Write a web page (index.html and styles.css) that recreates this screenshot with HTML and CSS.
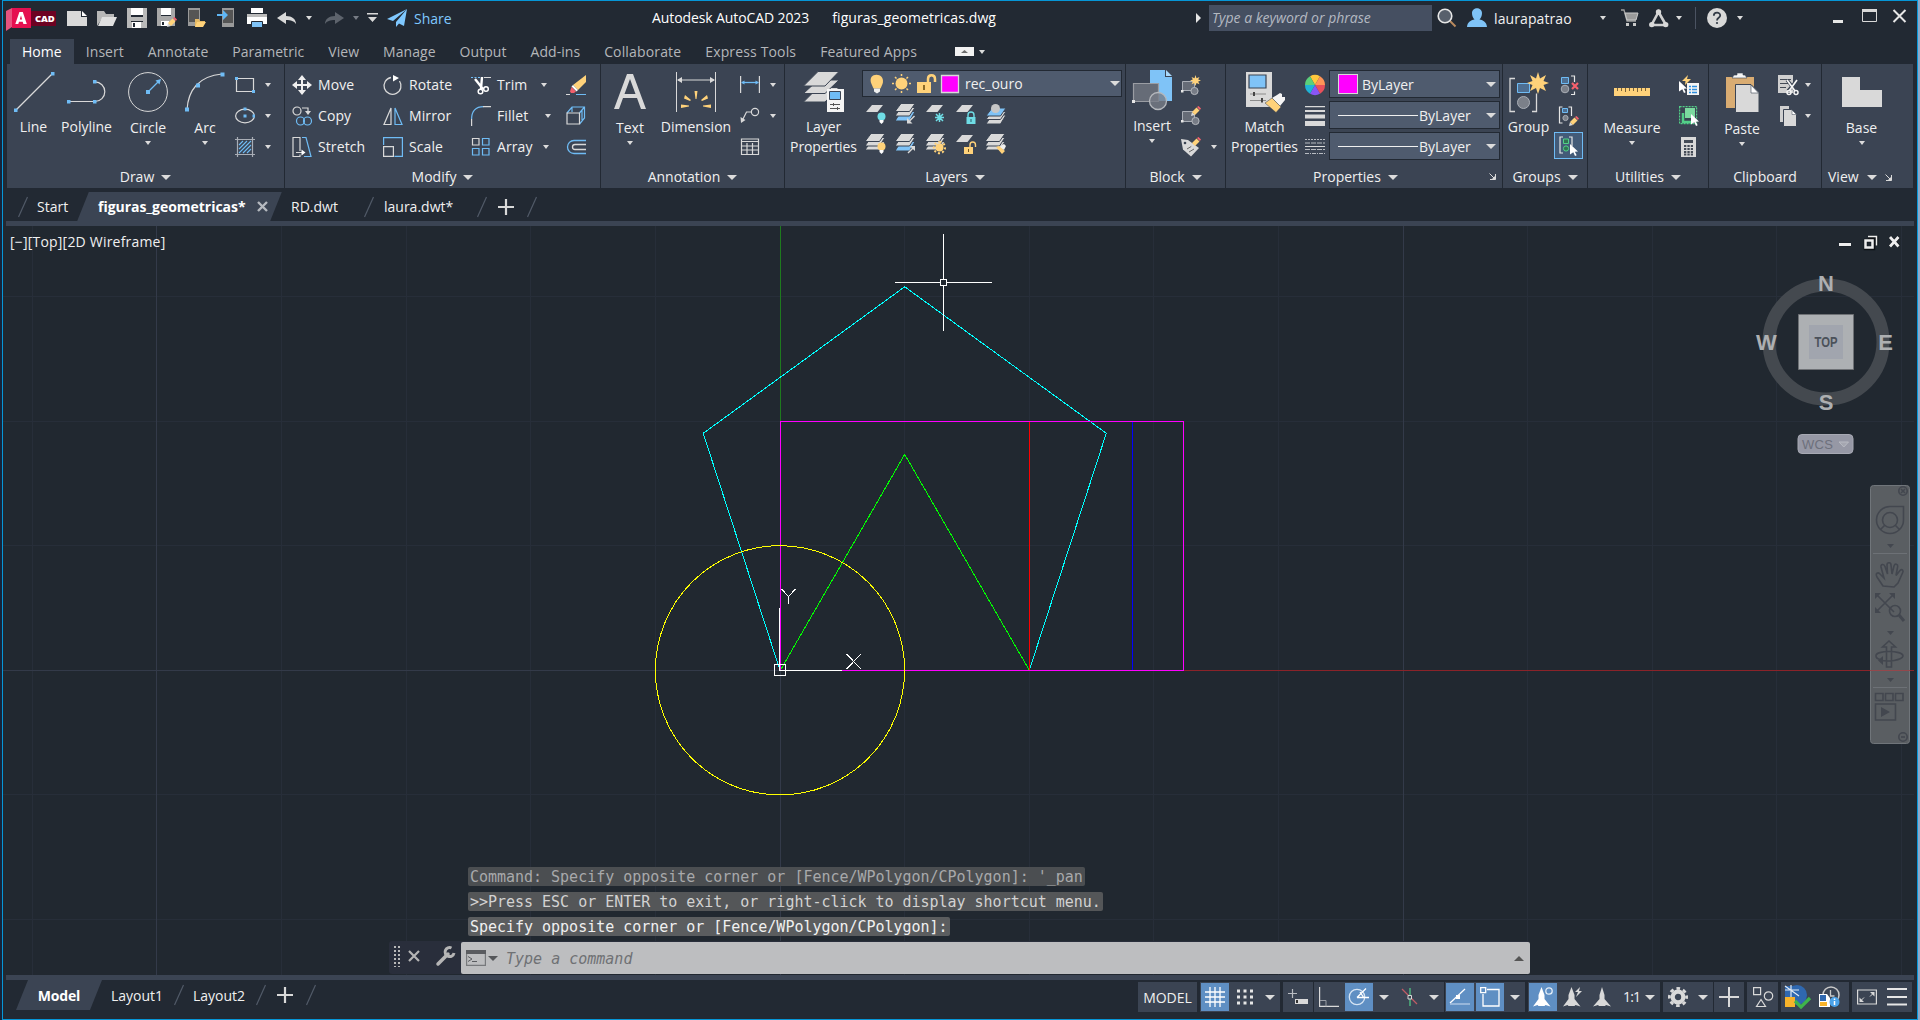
FILE: index.html
```html
<!DOCTYPE html>
<html lang="en">
<head>
<meta charset="utf-8">
<title>Autodesk AutoCAD 2023 - figuras_geometricas.dwg</title>
<link rel="stylesheet" href="styles.css">
</head>
<body>
<svg class="defs" width="0" height="0">
  <symbol id="stack" viewBox="0 0 20 20"><g fill="#d9d9d9" stroke="#3b4453"><path d="M5 7.500h14l-5.500 8.500h-14.500z"/><path d="M5 3.500h14l-5.500 8.500h-14.500z"/><path d="M5-.5h14l-5.500 8h-14.500z"/></g></symbol>
  <symbol id="stackblue" viewBox="0 0 20 20"><g stroke="#3b4453"><path fill="#7fc3f7" d="M5 7.500h14l-5.500 9.500h-14.500z"/><path fill="#d9d9d9" d="M5 3.500h14l-5.500 8.500h-14.500z"/><path fill="#d9d9d9" d="M5-.5h14l-5.500 8h-14.500z"/></g></symbol>
  <symbol id="sheet" viewBox="0 0 20 20"><path fill="#d9d9d9" d="M6 1h11l-5.500 7h-11.500z"/></symbol>
  <symbol id="pencil" viewBox="0 0 10 10"><path fill="#d9d9d9" d="M0 10l1-4 3 3z"/><path fill="#ffd27a" d="M1 6l4.500-4.500 3 3-4.500 4.500z"/><path fill="#f4606c" d="M6 1l1.500-1 2.500 2.500-1.200 1.500z"/></symbol>
  <symbol id="cursor" viewBox="0 0 8 12"><path fill="#fff" d="M0 0l8 7.500-3.200.3 1.900 3.500-1.700.7-1.700-3.700-3.300 2.200z"/></symbol>
  <symbol id="launch" viewBox="0 0 7 7"><path fill="none" stroke="#d9d9d9" d="M.5.5l5 5M6.500 1v5.500h-5.500"/><path fill="#d9d9d9" d="M6.500 2.500v4h-4z"/></symbol>
</svg>
<div class="window">

<header class="titlebar">
  <svg class="logo" width="50" height="24" viewBox="0 0 50 24"><path fill="#e8537f" d="M0 3l6-3v19l-6 4z"/><path fill="#6d0222" d="M23 3h27v15h-27z"/><path fill="#e51050" d="M6 0h19v20h-19z"/><path fill="#fff" fill-rule="evenodd" d="M13.400 4h3.400l4 12h-3.400l-.7-2.200h-3.700l-.7 2.200h-3zM15 7.500l-1.200 4h2.300z"/><text x="29" y="13.500" class="logotext">CAD</text></svg>
  <nav class="quick">
    <svg width="20" height="20"><path fill="#d9d9d9" d="M0 3h14v6h6v9h-20z"/><path fill="#fff" d="M15 3l5 5h-5z"/></svg>
    <svg width="20" height="20"><path fill="#b8b8b8" d="M0 18v-15h7l2 3h8v3h-11z"/><path fill="#e0e0e0" d="M5 9h15l-4 9h-15z"/></svg>
    <svg width="20" height="20"><path fill="#b9b9b9" d="M0 0h20v20h-20z"/><path fill="#fff" d="M4 0h12v8h-12zM5 14h9v6h-9z"/><path fill="#222933" d="M4 7h12v2h-12zM4 13h12v1h-12zM6 15h2v4h-2z"/></svg>
    <svg width="20" height="20"><path fill="#a8a8a8" d="M0 0h18v18h-18z"/><path fill="#fff" d="M4 0h10v7h-10zM4 13h8v5h-8z"/><path fill="#222933" d="M4 7h10v1h-10zM5 14h2v3h-2z"/><use href="#pencil" x="10" y="9" width="10" height="10"/></svg>
    <svg width="20" height="20"><path fill="#9a9a9a" d="M1 0h12v18h-12z"/><path fill="#555" d="M2 2h10v12h-10z"/><path fill="#e5b964" d="M8 19v-8h4l1 2h5v2"/><path fill="#ffd27a" d="M10 14h9l-3 5h-8z"/></svg>
    <svg width="20" height="20"><path fill="#9a9a9a" d="M5 0h12v19h-12z"/><path fill="#555" d="M6 2h10v13h-10z"/><path fill="#5fb6f5" d="M0 6h6v-4l5 5-5 5v-4h-6z"/></svg>
    <svg width="20" height="20"><path fill="#fff" d="M4 0h12v5h-12zM0 7h20v9h-20z"/><path fill="#bbb" d="M0 6h20v3h-20z"/><path fill="#7fc3f7" stroke="#222933" d="M4.500 13.500h11v6h-11z"/></svg>
    <svg width="20" height="20"><path fill="#d9d9d9" d="M0 10l9-6v4c6 0 10 3 10 8-2-3-5-4-10-4v4z"/></svg>
    <i class="caret"></i>
    <svg width="20" height="20"><path fill="#5d636c" d="M20 10l-9-6v4c-6 0-10 3-10 8 2-3 5-4 10-4v4z"/></svg>
    <i class="caret dim"></i>
    <svg class="custom" width="11" height="10"><path fill="#d9d9d9" d="M0 0h11v1.500h-11zM1 4h9l-4.500 5z"/></svg>
    <svg class="plane" width="20" height="18"><path fill="#7fc8ff" d="M20 0l-20 10 6 2zM20 0l-11 13v5l3-3.500 5 2.500z"/></svg>
    <span class="share">Share</span>
  </nav>
  <div class="apptitle"><span>Autodesk AutoCAD 2023</span><span class="doc">figuras_geometricas.dwg</span></div>
  <i class="caretright"></i>
  <div class="search">Type a keyword or phrase</div>
  <svg class="mag" width="20" height="20"><path stroke="#b98a5e" stroke-width="2" d="M13 13l5.500 5.500"/><circle cx="8" cy="8" r="6.800" fill="#58606c" stroke="#e6e6e6" stroke-width="1.600"/></svg>
  <svg class="user" width="20" height="20"><path fill="#7fc3f7" d="M5 5c0-6.500 10-6.500 10 0 0 3-1 5-2.500 6.500 4 .8 7 2.500 7.500 7.500h-20c.5-5 3.500-6.700 7.500-7.500-1.500-1.500-2.500-3.500-2.500-6.500z"/></svg>
  <span class="account">laurapatrao</span>
  <i class="caret c-account"></i>
  <svg class="cart" width="18" height="18"><path fill="none" stroke="#a0a0a0" stroke-width="1.300" d="M0 1h3l3 11h9"/><path fill="#9b9b9b" stroke="#c9c9c9" d="M4 4h13l-2 7h-9z"/><path fill="#c9c9c9" d="M5 14h3v3h-3zM12 14h3v3h-3z"/></svg>
  <svg class="adsk" width="20" height="19"><path fill="none" stroke="#d0d0d0" stroke-width="2.600" d="M9.500 3l-7 13h14.500z"/><g fill="#d9d9d9"><circle cx="9.500" cy="3" r="2.700"/><circle cx="2.800" cy="15.600" r="2.700"/><circle cx="16.700" cy="15.600" r="2.700"/></g></svg>
  <i class="caret c-adsk"></i><i class="vsep"></i>
  <svg class="help" width="20" height="20"><circle cx="10" cy="10" r="10" fill="#d9d9d9"/><path fill="none" stroke="#333b47" stroke-width="1.800" d="M6.800 7.800c0-4.200 6.500-4 6.400-.4 0 2.500-3.200 2.200-3.200 5"/><circle cx="10" cy="15" r="1.100" fill="#333b47"/></svg>
  <i class="caret c-help"></i>
  <svg class="winbtns" width="75" height="16"><path fill="#e6e6e6" d="M0 11h10v3h-10z"/><path fill="none" stroke="#d9d9d9" d="M29.500.5h14v12h-14z"/><path fill="#d9d9d9" d="M29 0h15v3h-15z"/><path stroke="#e6e6e6" stroke-width="2" d="M60.500 1l12 12M72.500 1l-12 12"/></svg>
</header>

<nav class="tabs">
  <span class="active">Home</span><span>Insert</span><span>Annotate</span><span>Parametric</span><span>View</span><span>Manage</span><span>Output</span><span>Add-ins</span><span>Collaborate</span><span>Express Tools</span><span>Featured Apps</span>
  <svg width="19" height="9"><path fill="#f2f2f2" d="M0 0h19v9h-19z"/><path fill="#6d6d6d" d="M6 6l3.500-3 3.500 3z"/></svg><i class="caret"></i>
</nav>

<section class="ribbon">
  <div class="panel draw">
    <div class="body">
      <div class="big b-line"><svg width="40" height="40"><path stroke="#d9d9d9" stroke-width="1.200" d="M2 38l36-36"/><path fill="#6fbcf5" d="M0 36.500h3.500v3.500h-3.500zM37 0h3.500v3.500h-3.500z"/></svg><b>Line</b></div>
      <div class="big b-poly"><svg width="40" height="40"><path fill="none" stroke="#d9d9d9" stroke-width="1.200" d="M1 29.500h27a9.800 9.800 0 0 0 0-19.600"/><path fill="#6fbcf5" d="M0 28h3.500v3.500h-3.500zM26 28h3.500v3.500h-3.500zM26 8h3.500v3.500h-3.500z"/></svg><b>Polyline</b></div>
      <div class="big drop b-circle"><svg width="40" height="40"><circle cx="20" cy="20" r="19.400" fill="none" stroke="#d9d9d9"/><path stroke="#6fbcf5" stroke-width="1.200" d="M20 20l10-10"/><path fill="#6fbcf5" d="M18 18h4v4h-4zM33 7l-1.500 5.500-4-4z"/></svg><b>Circle</b><i class="caret"></i></div>
      <div class="big drop b-arc"><svg width="40" height="40"><path fill="none" stroke="#d9d9d9" stroke-width="1.200" d="M2 38c1-20 12-34 35-36"/><path fill="#6fbcf5" d="M0 35.500h4v4h-4zM11 11.500h4v4h-4zM35.500.5h4v4h-4z"/></svg><b>Arc</b><i class="caret"></i></div>
      <div class="rows r-draw">
        <div><svg width="20" height="20"><path fill="none" stroke="#d9d9d9" stroke-width="1.200" d="M1.500 3.500h17v13h-17z"/><path fill="#6fbcf5" d="M0 2h3v3h-3zM17 15h3v3h-3z"/></svg><i class="caret"></i></div>
        <div><svg width="20" height="20"><ellipse cx="10" cy="10" rx="9.400" ry="6.800" fill="none" stroke="#d9d9d9" stroke-width="1.200"/><path fill="#6fbcf5" d="M8.500 8.500h3v3h-3zM8.500 1.500h3v3h-3zM17.500 8.500h2.500v3h-2.500z"/></svg><i class="caret"></i></div>
        <div><svg width="20" height="20"><path stroke="#a9aeb6" stroke-width="1.200" d="M2.500 0v20M17.500 0v20M0 2.500h20M0 17.500h20"/><path stroke="#6fbcf5" stroke-width="1.100" d="M4 8l4-4M4 12l8-8M4 16l12-12M8 16l8-8M12 16l4-4"/></svg><i class="caret"></i></div>
      </div>
    </div>
    <h3>Draw<i class="bigcaret"></i></h3>
  </div>

  <div class="panel modify">
    <div class="body">
      <div class="rows m1">
        <div><svg width="20" height="20"><path fill="#f0f0f0" d="M10 0l4 5h-3v4h4v-3l5 4-5 4v-3h-4v4h3l-4 5-4-5h3v-4h-4v3l-5-4 5-4v3h4v-4h-3z"/></svg>Move</div>
        <div><svg width="20" height="20"><g fill="none" stroke-width="1.200"><circle cx="5" cy="5" r="4" stroke="#d9d9d9"/><path stroke="#d9d9d9" d="M10 2h6v4"/><g stroke="#6fbcf5"><circle cx="8.500" cy="15" r="4"/><circle cx="15.500" cy="15" r="4"/></g></g><path fill="#d9d9d9" d="M13 5h6l-3 4z"/></svg>Copy</div>
        <div><svg width="20" height="20"><g fill="none" stroke-width="1.200"><path stroke="#d9d9d9" d="M8 14v-13.500h-7v19h7v-2M4 15.500h8"/><path stroke="#6fbcf5" d="M10 .5h4l5 19h-7"/></g><path fill="#fff" d="M9.500 12.500l4 3-4 3z"/></svg>Stretch</div>
      </div>
      <div class="rows m2">
        <div><svg width="20" height="20"><path fill="none" stroke="#d9d9d9" stroke-width="1.300" d="M8 2.500a8.500 8.500 0 1 0 8.500 3.500"/><path fill="#fff" d="M10 0l6 3-6 3.500z"/></svg>Rotate</div>
        <div><svg width="20" height="20"><path fill="none" stroke="#d9d9d9" stroke-width="1.200" d="M8 2v16.500h-7z"/><path fill="none" stroke="#6fbcf5" stroke-width="1.200" d="M12 2v16.500h7z"/></svg>Mirror</div>
        <div><svg width="20" height="20"><path fill="none" stroke="#6fbcf5" stroke-width="1.200" d="M.6 8v-7.400h18.800v18.800h-8"/><path fill="none" stroke="#d9d9d9" stroke-width="1.200" d="M.6 9.600h9.800v9.800h-9.800z"/></svg>Scale</div>
      </div>
      <div class="rows m3">
        <div><svg width="20" height="20"><path stroke="#6fbcf5" stroke-dasharray="2 1.500" d="M0 2.500h10"/><path stroke="#d9d9d9" d="M13 2.500h7"/><path stroke="#fff" stroke-width="2.400" d="M4 4l8 10M11 2l-1 12"/><circle cx="9.500" cy="16.500" r="2.300" fill="none" stroke="#fff" stroke-width="1.500"/><circle cx="15" cy="14" r="2.300" fill="none" stroke="#fff" stroke-width="1.500"/></svg><span class="w1">Trim</span><i class="caret"></i></div>
        <div><svg width="20" height="20"><path fill="none" stroke="#6fbcf5" stroke-width="1.200" d="M.6 13c0-8 4-12.400 12-12.400"/><path stroke="#d9d9d9" stroke-width="1.200" d="M.6 13v7M12 .6h8"/></svg><span class="w2">Fillet</span><i class="caret"></i></div>
        <div><svg width="20" height="20"><g fill="none" stroke-width="1.200"><path stroke="#d9d9d9" d="M1.500 1.500h6.500v6.500h-6.500z"/><path stroke="#6fbcf5" d="M11.500 1.500h6.500v6.500h-6.500zM1.500 11.500h6.500v6.500h-6.500zM11.500 11.500h6.500v6.500h-6.500z"/></g></svg><span class="w3">Array</span><i class="caret"></i></div>
      </div>
      <div class="rows m4">
        <div><svg width="20" height="20"><path fill="#ffd27a" d="M20 0v7l-8 8-5-5z"/><path fill="#fff" d="M7 10l5 5-1.500 1.500-5-5z"/><path fill="#f4606c" d="M5.500 12l4.500 4.500-2 1.500h-3l-1-1.500z"/><path stroke="#d9d9d9" d="M0 19.500h4"/><path stroke="#6fbcf5" d="M10 19.500h10"/></svg></div>
        <div><svg width="20" height="20"><path fill="none" stroke="#6fbcf5" stroke-width="1.200" d="M1 7l5-6h12.500v11l-5 6M18.500 1l-5 6M6 1v5M16 4v10"/><path fill="none" stroke="#d9d9d9" stroke-width="1.200" d="M1 7h12.500v11h-12.500z"/></svg></div>
        <div><svg width="20" height="20"><path fill="none" stroke="#6fbcf5" stroke-width="1.300" d="M20 3.500h-12a6.500 6.500 0 0 0 0 13h12"/><path fill="none" stroke="#d9d9d9" stroke-width="1.300" d="M20 7.500h-11a2.500 2.500 0 0 0 0 5h11"/></svg></div>
      </div>
    </div>
    <h3>Modify<i class="bigcaret"></i></h3>
  </div>

  <div class="panel annot">
    <div class="body">
      <div class="big drop b-text"><svg width="40" height="40"><path fill="#d9d9d9" fill-rule="evenodd" d="M17 2h6l13 35h-5l-4-11h-14l-4 11h-5zM20 7l-5.500 15h11z"/></svg><b>Text</b><i class="caret"></i></div>
      <div class="big b-dim"><svg width="40" height="40"><path stroke="#d9d9d9" d="M.5 0v40M39.500 0v40M2 8h36"/><path fill="#d9d9d9" d="M1 8l5-3v6zM39 8l-5-3v6z"/><path fill="#ffd27a" d="M18.500 19h3l-1 8h-1zM9 23l6 5-1 1-6-2.500zM31 23l-6 5 1 1 6-2.500zM5 32.500l8 1v1l-8 1.500zM35 32.500l-8 1v1l8 1.500z"/></svg><b>Dimension</b></div>
      <div class="rows r-annot">
        <div><svg width="20" height="20"><path stroke="#d9d9d9" stroke-width="1.200" d="M.6 1v17M19.400 1v17"/><path stroke="#6fbcf5" stroke-width="1.300" d="M2 7.500h16"/><path fill="#6fbcf5" d="M1 7.500l3.500-2v4zM19 7.500l-3.500-2v4z"/></svg><i class="caret"></i></div>
        <div><svg width="20" height="20"><circle cx="15" cy="6" r="3.600" fill="none" stroke="#d9d9d9" stroke-width="1.200"/><path fill="none" stroke="#d9d9d9" stroke-width="1.200" d="M11.500 6h-5l-4 8"/><path fill="#d9d9d9" d="M.5 11l5 3-4.500 3z"/></svg><i class="caret"></i></div>
        <div><svg width="20" height="20"><path fill="none" stroke="#d9d9d9" stroke-width="1.200" d="M1.500 2h17v15.500h-17zM1.500 4.500h17M1.500 9h17M1.500 13h17M7 6v11M12.500 6v11"/></svg></div>
      </div>
    </div>
    <h3>Annotation<i class="bigcaret"></i></h3>
  </div>

  <div class="panel layers">
    <div class="body">
      <div class="big b-layer"><svg width="40" height="40"><g fill="#d9d9d9" stroke="#3b4453"><path d="M14 15.500h21l-14 14.500h-21.500z"/><path d="M14 8h21l-14 13.500h-21.500z"/><path d="M14-.5h21l-14 14.500h-21.500z"/></g><path fill="#f5f5f5" d="M23 17h17v23h-17z"/><path fill="#6fbcf5" stroke="#3b4453" d="M25.500 19.500h11v8h-11z"/><path stroke="#555" d="M26 32.500h10M26 36.500h10M29.500 31v3M33.500 35v3"/></svg><b>Layer<br>Properties</b></div>
      <div class="layerbox">
        <div class="combo c-layer"><svg width="92" height="22"><path fill="#ffd27a" d="M3.500 11c-5.500-12.500 15-12.500 11 0l-2 4.500h-7z"/><path fill="#f0f0f0" d="M6 15.500h6v3l-3 2-3-2z"/><circle cx="33.500" cy="10.500" r="6" fill="#ffd27a"/><path stroke="#ffd27a" stroke-width="1.500" d="M33.500 1v2M33.500 18v2M24 10.500h2M41 10.500h2M27 4l1.500 1.500M38.500 15.500l1.500 1.500M40 4l-1.500 1.500M28.500 15.500l-1.500 1.500"/><path fill="#ffd27a" d="M49 9h14v11h-14z"/><path fill="none" stroke="#ffd27a" stroke-width="2.500" d="M60 10v-4c0-5 7-5 7 0v3"/><path fill="#8c6a27" d="M55 12h2v5h-2z"/><path fill="#ff00ff" stroke="#d9d9d9" stroke-width="1.300" d="M73.500 2.500h17v17h-17z"/></svg><span>rec_ouro</span><i class="bigcaret"></i></div>
        <div class="icons">
          <svg width="20" height="20"><use href="#sheet" width="20" height="20"/><circle cx="15.500" cy="12.500" r="4" fill="#6fdde6"/><path fill="#fff" d="M13.500 16h4v2l-2 2-2-2z"/></svg>
          <svg width="20" height="20"><use href="#stackblue" width="20" height="20"/><path stroke="#d9d9d9" stroke-width="1.500" d="M18.500 12l-5 5"/><path fill="#d9d9d9" d="M11 14v5.500h5.500z"/></svg>
          <svg width="20" height="20"><use href="#sheet" width="20" height="20"/><path stroke="#6fdde6" stroke-width="1.500" d="M13.500 9v9M9 13.500h9M10 10l7 7M17 10l-7 7"/></svg>
          <svg width="20" height="20"><use href="#sheet" width="20" height="20"/><path fill="#6fdde6" d="M10.500 13h9v7h-9z"/><path fill="none" stroke="#6fdde6" stroke-width="1.400" d="M12 13v-2c0-4 6-4 6 0v2"/><path fill="#2c5c68" d="M14.500 15h1v3h-1z"/></svg>
          <svg width="20" height="20"><g stroke="#3b4453"><path fill="#d9d9d9" d="M6 11h14l-5.500 9h-14.500z"/><path fill="#d9d9d9" d="M6 7.500h14l-5.500 8h-14.500z"/><path fill="#7fc3f7" d="M6 4h14l-5.500 8h-14.500z"/></g><circle cx="9.500" cy="4.500" r="4.500" fill="#c6c6c6"/></svg>
        </div>
        <div class="icons">
          <svg width="20" height="20"><use href="#stack" width="20" height="20"/><circle cx="15.500" cy="12.500" r="4" fill="#ffd27a"/><path fill="#fff" d="M13.500 16h4v2l-2 2-2-2z"/></svg>
          <svg width="20" height="20"><use href="#stackblue" width="20" height="20"/><path stroke="#d9d9d9" stroke-width="1.500" d="M12 19l5-5"/><path fill="#d9d9d9" d="M19 17v-5h-5.500z"/></svg>
          <svg width="20" height="20"><use href="#stack" width="20" height="20"/><circle cx="13.500" cy="13.500" r="4" fill="#ffd27a"/><path stroke="#ffd27a" stroke-width="2" stroke-dasharray="2 2.200" d="M13.500 8a5.600 5.600 0 1 1-.1 0" fill="none"/></svg>
          <svg width="20" height="20"><use href="#sheet" width="20" height="20"/><path fill="#ffd27a" d="M8 13h9v7h-9z"/><path fill="none" stroke="#ffd27a" stroke-width="1.400" d="M14 13v-2c0-4 5.500-4 5.500 0v2"/><path fill="#6b5220" d="M12 15h1v3h-1z"/></svg>
          <svg width="20" height="20"><use href="#stack" width="20" height="20"/><path fill="#f0f0f0" d="M13 14l3-3 2-1 2 2-1 2-1 2z"/><path fill="#ffd27a" d="M10 13l3-1 6 5-3 3z"/></svg>
        </div>
      </div>
    </div>
    <h3>Layers<i class="bigcaret"></i></h3>
  </div>

  <div class="panel block">
    <div class="body">
      <div class="big drop b-insert"><svg width="40" height="40"><path fill="#7fc3f7" d="M18 0h15v7h7v24h-22z"/><path fill="#a8d8fb" d="M34 0l6 6h-6z"/><path fill="#666c77" stroke="#9a9da3" stroke-width="1.200" d="M1.500 13.500h25v18h-25z"/><circle cx="26" cy="31" r="8.500" fill="#777c86" fill-opacity=".8" stroke="#b5b8bd" stroke-width="1.300"/><path fill="#e6e6e6" d="M0 30h3v3h-3z"/></svg><b>Insert</b><i class="caret"></i></div>
      <div class="rows r-block">
        <div><svg width="20" height="20"><path fill="#666c77" stroke="#a9aeb6" d="M1.500 6.500h12v9h-12z"/><circle cx="13.500" cy="16" r="3.600" fill="#777c86" stroke="#b5b8bd"/><path fill="#ffd27a" d="M14.500 0l1 3.200 3-1.200-1.300 2.600 2.800.9-2.800 1 1.300 2.800-3-1.200-1 3-1-3-3 1.200 1.300-2.800-2.800-1 2.800-.9-1.300-2.600 3 1.200z"/><path fill="#e6e6e6" d="M0 15h2.500v2.500h-2.500z"/></svg></div>
        <div><svg width="20" height="20"><path fill="#666c77" stroke="#a9aeb6" d="M1.500 5.500h12v10h-12z"/><circle cx="14.500" cy="15" r="3.600" fill="#777c86" stroke="#b5b8bd"/><use href="#pencil" x="10" y="0" width="10" height="10"/><path fill="#e6e6e6" d="M0 14h2.500v2.500h-2.500z"/></svg></div>
        <div><svg width="20" height="20"><path fill="#d9d9d9" d="M0 2l7 1 11 8-8 8.500-8-7z"/><circle cx="4" cy="6" r="1.300" fill="#3b4453"/><path stroke="#666" d="M6 12l5-3M8 15l5-3"/><use href="#pencil" x="10" y="0" width="10" height="10"/></svg><i class="caret"></i></div>
      </div>
    </div>
    <h3>Block<i class="bigcaret"></i></h3>
  </div>

  <div class="panel props">
    <div class="body">
      <div class="big b-match"><svg width="40" height="40"><path fill="#d9d9d9" d="M0 0h26v35h-26z"/><path fill="#7fc3f7" stroke="#3b4453" stroke-width="1.200" d="M3 3h17v13h-17z"/><path stroke="#8b8b8b" stroke-width="1.200" d="M4 22h16M4 28.500h16"/><path stroke="#444" stroke-width="2" d="M8 20v4M16 26v4.500"/><path fill="#f5f5f5" d="M26 26l5-3 3-2 2 1v3h3v3l-5 6z"/><path fill="#ffd27a" stroke="#3b4453" stroke-width=".5" d="M19 31l7-5 9 9-5 5.500z"/></svg><b>Match<br>Properties</b></div>
      <div class="rows r-props">
        <div><svg width="20" height="20"><path fill="#ffc83d" d="M10 10l-5-8.700a10 10 0 0 1 10 0z"/><path fill="#ff9457" d="M10 10l5-8.700a10 10 0 0 1 5 8.700z"/><path fill="#e8505b" d="M10 10h10a10 10 0 0 1-5 8.700z"/><path fill="#8a56f5" d="M10 10l5 8.700a10 10 0 0 1-10 0z"/><path fill="#1fb3d6" d="M10 10l-5 8.700a10 10 0 0 1-5-8.700z"/><path fill="#5bcf7a" d="M10 10h-10a10 10 0 0 1 5-8.700z"/></svg></div>
        <div><svg width="20" height="20"><path fill="#d9d9d9" d="M0 0h20v1.200h-20zM0 4h20v2h-20zM0 8.500h20v4h-20zM0 15h20v5h-20z"/></svg></div>
        <div><svg width="20" height="20"><path stroke="#b8bcc2" stroke-dasharray="2 1" d="M0 2.500h20"/><path stroke="#b8bcc2" stroke-dasharray="5 1" d="M0 6h20M0 12.500h20"/><path stroke="#d9d9d9" d="M0 9.500h20"/><path stroke="#b8bcc2" stroke-dasharray="4 1 1 1" d="M0 16.500h20"/></svg></div>
      </div>
      <div class="combos">
        <div class="combo"><i class="swatch"></i><span>ByLayer</span><i class="bigcaret"></i></div>
        <div class="combo"><i class="rule"></i><span>ByLayer</span><i class="bigcaret"></i></div>
        <div class="combo"><i class="rule"></i><span>ByLayer</span><i class="bigcaret"></i></div>
      </div>
    </div>
    <h3>Properties<i class="bigcaret"></i><svg class="launch" width="7" height="7"><use href="#launch"/></svg></h3>
  </div>

  <div class="panel groups">
    <div class="body">
      <div class="big b-group"><svg width="40" height="40"><path fill="none" stroke="#d9d9d9" stroke-width="1.300" d="M6 6.500h-5v33h5M23 39.500h4.500v-18"/><path fill="#4e6f92" stroke="#6fbcf5" d="M8.500 11.500h12v9h-12z"/><circle cx="14.500" cy="30.500" r="6" fill="#7b8089" stroke="#a9aeb6"/><path fill="#ffd27a" d="M29 0l2 6.500 6-3.500-2.500 6 5.500 2-5.500 2 2.500 6-6-3-2 6-2-6-6 3 2.500-6-5.500-2 5.500-2-2.500-6 6 3.500z"/></svg><b>Group</b></div>
      <div class="rows r-groups">
        <div><svg width="20" height="20"><path fill="#4e6f92" stroke="#6fbcf5" d="M2.500 2.500h7v6h-7z"/><circle cx="6" cy="14" r="3.800" fill="#7b8089" stroke="#a9aeb6"/><path fill="none" stroke="#e6e6e6" stroke-width="1.200" d="M12 1h3.500v6M12 19.500h3.500v-3"/><path stroke="#f4606c" stroke-width="2.200" d="M13 8l6 6M19 8l-6 6"/></svg></div>
        <div><svg width="20" height="20"><path fill="none" stroke="#e6e6e6" stroke-width="1.200" d="M3.500 1h-3v16h3M9.500 1h3v9"/><path fill="#4e6f92" stroke="#6fbcf5" d="M3.500 2.500h5v4h-5z"/><circle cx="6.500" cy="12" r="2.600" fill="#7b8089" stroke="#a9aeb6"/><use href="#pencil" x="10" y="10" width="10" height="10"/></svg></div>
        <div class="on"><svg width="20" height="20"><path fill="none" stroke="#e6e6e6" stroke-width="1.200" d="M4 1h-3v16h3M10 1h3v9"/><path fill="#2f7553" stroke="#52cf88" d="M4.500 3h5v4.500h-5z"/><circle cx="7" cy="12.500" r="2.600" fill="#2f7553" stroke="#52cf88"/><use href="#cursor" x="11" y="8" width="8" height="12"/></svg></div>
      </div>
    </div>
    <h3>Groups<i class="bigcaret"></i></h3>
  </div>

  <div class="panel utils">
    <div class="body">
      <div class="big drop b-measure"><svg width="40" height="40"><path fill="#ffd27a" d="M2 16h36v8h-36z"/><path stroke="#7a6338" d="M5.500 16v3M9.500 16v3M13.500 16v4M17.500 16v3M21.500 16v3M25.500 16v4M29.500 16v3M33.500 16v3"/></svg><b>Measure</b><i class="caret"></i></div>
      <div class="rows r-utils">
        <div><svg width="20" height="20"><path fill="#ffd27a" d="M9 0l-6 6h3.500l-.5 4 6-6h-4z"/><use href="#cursor" x="0" y="6" width="8" height="12"/><path fill="#f5f5f5" d="M8 8h12v12h-12z"/><path stroke="#2f8fe0" stroke-width="1.400" d="M10 11.500h2M13 11.500h5M10 14.500h2M13 14.500h5M10 17.500h2M13 17.500h5"/></svg></div>
        <div><svg width="20" height="20"><path fill="none" stroke="#52cf88" stroke-width="1.200" stroke-dasharray="2 1" d="M.6.600h17v17h-17z"/><path fill="#7bd99f" d="M6 2h10v10h-10z"/><path fill="none" stroke="#52cf88" stroke-width="2.500" d="M4 7v9h9"/><use href="#cursor" x="12" y="8" width="8" height="12"/></svg></div>
        <div><svg width="20" height="20"><path fill="#d9d9d9" d="M2 0h15v20h-15z"/><path fill="#444b56" d="M5 3h9v3h-9z"/><path stroke="#444b56" stroke-width="2" stroke-dasharray="2.300 1.100" d="M5 9h9M5 12h9M5 15h9M5 17.500h9"/></svg></div>
      </div>
    </div>
    <h3>Utilities<i class="bigcaret"></i></h3>
  </div>

  <div class="panel clip">
    <div class="body">
      <div class="big drop b-paste"><svg width="40" height="41"><path fill="#d9ac72" d="M4 5h28v31h-28z"/><path fill="#f5f5f5" stroke="#3b4453" stroke-width=".6" d="M10 6l2-3h3v-2h6v2h2l2 3z"/><path fill="#d9d9d9" stroke="#3b4453" d="M13.500 12.500h15.500l8 8v20h-23.500z"/><path fill="#fff" stroke="#3b4453" stroke-width=".6" d="M29 13v8h7.500z"/></svg><b>Paste</b><i class="caret"></i></div>
      <div class="rows r-clip">
        <div><svg width="20" height="20"><path fill="#d0d0d0" d="M0 0h15v18h-15z"/><path stroke="#444b56" d="M2 4.500h11M2 8.500h8M2 12.500h6"/><path stroke="#3b4453" stroke-width="3.500" d="M9 5l9 11M19 5l-9 11"/><path stroke="#f5f5f5" stroke-width="1.700" d="M9 5l8 11M19 5l-8 11"/><circle cx="11" cy="17.500" r="2" fill="none" stroke="#f5f5f5" stroke-width="1.500"/><circle cx="18" cy="17.500" r="2" fill="none" stroke="#f5f5f5" stroke-width="1.500"/></svg><i class="caret"></i></div>
        <div><svg width="20" height="20"><path fill="#d0d0d0" d="M2 0h9v16h-9z"/><path fill="#d9d9d9" stroke="#3b4453" d="M5.500 3.500h8l5 5v12h-13z"/><path fill="#fff" stroke="#3b4453" stroke-width=".5" d="M14 4v4.500h4.500z"/></svg><i class="caret"></i></div>
      </div>
    </div>
    <h3>Clipboard</h3>
  </div>

  <div class="panel view">
    <div class="body">
      <div class="big drop b-base"><svg width="40" height="40"><path fill="#d9d9d9" d="M0 5h18v13h22v17h-40z"/></svg><b>Base</b><i class="caret"></i></div>
    </div>
    <h3>View<i class="bigcaret"></i><svg width="7" height="7"><use href="#launch"/></svg></h3>
  </div>
</section>

<nav class="files">
  <svg class="slash" width="10" height="20"><path d="M.5 20l9-20"/></svg>
  <span class="f-start">Start</span>
  <span class="f-active"><b>figuras_geometricas*</b><svg width="11" height="11"><path stroke="#b5b9bf" stroke-width="2.400" d="M1 1l9 9M10 1l-9 9"/></svg></span>
  <span class="f-rd">RD.dwt</span>
  <svg class="slash" width="10" height="20"><path d="M.5 20l9-20"/></svg>
  <span class="f-laura">laura.dwt*</span>
  <svg class="slash" width="10" height="20"><path d="M.5 20l9-20"/></svg>
  <svg class="plus" width="16" height="16"><path stroke="#d9d9d9" stroke-width="2.200" d="M0 8h16M8 0v16"/></svg>
  <svg class="slash" width="10" height="20"><path d="M.5 20l9-20"/></svg>
</nav>

<main class="canvas">
  <svg class="drawing" width="1914" height="749" viewBox="3 226 1914 749">
    <g shape-rendering="crispEdges" fill="none">
      <path stroke="#272e39" d="M32.500 226v749M281.500 226v749M406.500 226v749M530.500 226v749M655.500 226v749M904.500 226v749M1029.500 226v749M1153.500 226v749M1278.500 226v749M1527.500 226v749M1652.500 226v749M1776.500 226v749M1901.500 226v749M3 296.500h1911M3 421.500h1911M3 545.500h1911M3 794.500h1911M3 919.500h1911"/>
      <path stroke="#333a49" d="M156.500 226v749M1403.500 226v749M780.500 670v305M3 670.500h777"/>
      <path stroke="#1e7a1e" d="M780.500 226v195"/>
      <path stroke="#8a2329" d="M1184 670.500h730"/>
      <path stroke="#00ffff" d="M780 670.300l-76.800-237 201.500-146.500 201.600 146.500-77 237z"/>
      <path stroke="#00ff00" d="M780.300 670.400l124.400-216 124.700 216z"/>
      <path stroke="#0000ff" d="M1132.500 421v249"/>
      <path stroke="#ff00ff" d="M780.500 421.500h403v249h-403z"/>
      <path stroke="#ff0000" d="M1029.500 422v248"/>
      <circle cx="780" cy="670.300" r="124.600" stroke="#ffff00"/>
      <path stroke="#fff" d="M779.500 608v57M785 670.500h57M774.500 664.500h11v11h-11zM779.500 664v6h6M781.500 589l7 7.500 7-7.500M788.500 596v8M846.500 654l14.500 15M861 654l-14.500 15"/>
      <path stroke="#fff" d="M895 282.500h45M947 282.500h45M943.500 234v45M943.500 286v45M940.500 279.500h6v6h-6z"/>
    </g>
  </svg>
  <div class="vplabel">[−][Top][2D Wireframe]</div>
  <svg class="docbtns" width="66" height="18"><g stroke="#0d1014" stroke-width="3.500" fill="none"><path d="M2 10.500h12M28.500 6.500h8v8h-8zM31 3.500h8.500v8M53 3l9 9.500M62 3l-9 9.500"/></g><g stroke="#eee" fill="none"><path stroke-width="3" d="M2 10.500h12"/><path stroke-width="2.500" d="M28.500 6.500h7v7h-7z"/><path stroke-width="1.500" d="M31 2.500h8.500v9"/><path stroke-width="2.800" d="M53 3l8.500 9.500M61.500 3l-8.500 9.500"/></g></svg>
  <svg class="cube" width="140" height="190" viewBox="1755 270 140 190">
    <circle cx="1826" cy="342" r="57" fill="none" stroke="#44494f" stroke-width="13"/>
    <path fill="#adb0b3" stroke="#6e7175" d="M1798.500 314.500h55v55h-55z"/><path fill="#a1a5ae" d="M1809 325h34v34h-34z"/>
    <text class="top" x="1826" y="347" textLength="23" lengthAdjust="spacingAndGlyphs">TOP</text>
    <g class="compass"><text x="1826" y="290.500">N</text><text x="1826" y="409.500">S</text><text x="1766.500" y="350">W</text><text x="1885.500" y="350">E</text></g>
    <rect x="1798" y="434.500" width="55" height="19" rx="4" fill="#9698a5" stroke="#a7a9b3"/>
    <text class="wcs" x="1802" y="449">WCS</text><path fill="#a4a6b0" stroke="#b8bac2" d="M1839 442h9.500l-4.700 5z"/>
  </svg>
  <svg class="navbar" width="42" height="262" viewBox="1869 484 42 262">
    <rect x="1870.500" y="485.500" width="39" height="258" rx="3" fill="#5a5e62" stroke="#70757a"/>
    <path stroke="#94484c" d="M1870 670.500h40"/><path stroke="#6d7176" d="M1873 553.500h34M1873 687.500h34"/>
    <g fill="none" stroke="#43474f" stroke-width="1.600">
      <circle cx="1903" cy="491" r="4.200"/><path d="M1901 489l4 4M1905 489l-4 4"/>
      <path d="M1876.500 520a13.500 13.500 0 0 1 13.500-13.500h13.500v13.500a13.500 13.500 0 0 1-27 0z"/><circle cx="1890" cy="520" r="7.500"/><path d="M1884.500 525.500l-4 4M1895.500 525.500l4 4"/>
      <path d="M1883 586l-6-9c-2-4 1-5 3-3l4 4-3-11c-.5-3 3-3.500 4-.5l2.500 7.500-.5-9c0-3 4-3 4 0l1 9 2-8c1-3 4-2 3.700.5l-1.700 9 4-5c2-2 4 0 2.500 2.500l-4.500 10-4 4z"/>
      <path d="M1876 594l18 18M1894 594l-18 18"/><circle cx="1895" cy="611" r="5.500"/><path stroke-width="3" d="M1899 615l5 6"/>
      <path d="M1886.500 667v-20h-4l6.500-6 6.500 6h-4v20zM1880 660c8 2.500 22 0 23-4 0-6-28-6-27 0 0 2 2 3 4 3.500"/>
      <path d="M1875.500 693.500h7.500v7h-7.500zM1885.500 693.500h7.500v7h-7.500zM1895.500 693.500h7.500v7h-7.500zM1875.500 704h20v16h-20z"/>
      <circle cx="1903" cy="737" r="4.200"/><path d="M1901 737h4"/>
    </g>
    <path fill="#43474f" d="M1875 593h6l-6 6zM1895 593v6l-6-6zM1875 613v-6l6 6zM1887 544h7l-3.500 4zM1887 631h7l-3.500 4zM1887 678h7l-3.500 4zM1881 707l9 5-9 5zM1883 656v9l-5-4.500z"/>
  </svg>
  <div class="console">
    <p>Command: Specify opposite corner or [Fence/WPolygon/CPolygon]: '_pan</p>
    <p>&gt;&gt;Press ESC or ENTER to exit, or right-click to display shortcut menu.</p>
    <p>Specify opposite corner or [Fence/WPolygon/CPolygon]:</p>
  </div>
  <div class="cmdbar">
    <svg class="grip" width="72" height="33"><path stroke="#b9b9b9" stroke-width="2" stroke-dasharray="2 2" d="M6 5v21M10 5v21"/><path stroke="#b5b5b5" stroke-width="2.200" d="M20 10l10 10M30 10l-10 10"/><path stroke="#b5b5b5" stroke-width="3.500" stroke-linecap="round" d="M49 23l10-10"/><path fill="none" stroke="#b5b5b5" stroke-width="3" d="M62.500 7a4.500 4.500 0 1 0 2.500 5"/></svg>
    <div class="cmdinput"><svg width="20" height="16"><path fill="none" stroke="#77797c" stroke-width="1.200" d="M.6.600h18.800v14.800h-18.800z"/><path fill="#5a5c60" d="M0 0h20v4h-20z"/><path fill="none" stroke="#5a5c60" d="M2 6.500l4 2.500-4 2.500M6 11.500h5"/></svg><i class="bigcaret"></i><em>Type a command</em><i class="bigcaret up"></i></div>
  </div>
</main>

<footer class="status">
  <span class="l-active">Model</span><span class="l1">Layout1</span><svg class="slash" width="10" height="20"><path d="M.5 20l9-20"/></svg><span class="l2">Layout2</span><svg class="slash" width="10" height="20"><path d="M.5 20l9-20"/></svg>
  <svg class="plus" width="16" height="16"><path stroke="#d9d9d9" stroke-width="2.200" d="M0 8h16M8 0v16"/></svg><svg class="slash" width="10" height="20"><path d="M.5 20l9-20"/></svg>
  <div class="tools">
    <div class="box s-model">MODEL</div>
    <div class="box s-grid"><span class="on"><svg width="20" height="20"><path stroke="#fff" stroke-width="1.300" d="M5 0v20M10 0v20M15 0v20M0 5h20M0 10h20M0 15h20"/></svg></span><svg width="20" height="20"><path stroke="#e6e6e6" stroke-width="3" stroke-dasharray="3 3.500" d="M2 4h17M2 10h17M2 16h17"/></svg><i class="bigcaret"></i></div>
    <div class="box s-dyn"><svg width="20" height="20"><path stroke="#b9bcc2" stroke-width="1.200" d="M0 6.500h9M4.500 2v9"/><path fill="#d9d9d9" d="M7 12h13v5h-13z"/><path fill="#333" d="M8 13h2v3h-2z"/></svg></div>
    <div class="box s-ortho"><svg width="20" height="20"><path fill="none" stroke="#d9d9d9" stroke-width="1.200" d="M.6 0v19.400h19.400"/><path fill="none" stroke="#9a9ea6" d="M1 13.500h6v6"/></svg><span class="on"><svg width="20" height="20"><circle cx="8" cy="10" r="7.700" fill="none" stroke="#d6e4f3" stroke-width="1.300"/><path stroke="#fff" stroke-width="1.300" d="M8 10.500h12M8 10.500l9-9M11 5l4 6"/></svg></span><i class="bigcaret"></i><svg width="20" height="20"><path stroke="#c05c65" stroke-width="1.200" d="M2 2l15 15"/><path stroke="#52cf88" stroke-width="1.200" d="M10 1v18"/><path fill="#3b4453" stroke="#d9d9d9" d="M8 8.500h3.500v3.500h-3.500z"/></svg><i class="bigcaret"></i></div>
    <div class="box s-snap"><span class="on"><svg width="20" height="20"><path stroke="#fff" stroke-width="1.300" d="M0 16l15-14"/><path stroke="#b5cde6" stroke-width="1.300" d="M0 17h20"/><path fill="#fff" d="M6 8h4v4h-4z"/></svg></span><span class="on"><svg width="20" height="20"><path fill="none" stroke="#fff" stroke-width="1.300" d="M3 7v12h16v-16.500h-12M.7.700h5v5h-5z"/></svg></span><i class="bigcaret"></i></div>
    <div class="box s-anno"><span class="on"><svg width="20" height="20"><path fill="#fff" d="M8.500 0l3 8v4l6 7.500-5-1.500-1 1h-6l-1-1-4.500 1.500 5.500-7.500v-4z"/><circle cx="16" cy="4" r="3.200" fill="#5f8fc3" stroke="#e3edf7" stroke-width="1.300"/></svg></span><svg width="20" height="20"><path fill="#d9d9d9" d="M8.500 0l3 8v4l6 7.500-5-1.500-1 1h-6l-1-1-4.500 1.500 5.500-7.500v-4zM17 0l-5 5h3l-2 5 6-6h-3z"/></svg><svg width="20" height="20"><path fill="#d9d9d9" d="M9 0l2.500 8v4l6.500 7.500-5-1.500-1 1h-6l-1-1-5 1.500 6.500-7.500v-4z"/></svg><span class="scale">1:1</span><i class="bigcaret"></i></div>
    <div class="box s-gear"><svg width="20" height="20"><circle cx="10" cy="10" r="5.300" fill="none" stroke="#d9d9d9" stroke-width="4.200"/><circle cx="10" cy="10" r="8.600" fill="none" stroke="#d9d9d9" stroke-width="2.800" stroke-dasharray="3.600 3.154" stroke-dashoffset="1.800"/></svg><i class="bigcaret"></i></div>
    <div class="box s-plus"><svg width="20" height="20"><path stroke="#d9d9d9" stroke-width="2" d="M0 10h20M10 0v20"/></svg></div>
    <div class="box s-shapes"><svg width="20" height="20"><g fill="none" stroke="#d9d9d9" stroke-width="1.200"><path d="M.6.600h7v7h-7zM8 12.500l4.500 7h-9z"/><circle cx="15.500" cy="9" r="4.200"/></g></svg></div>
    <div class="box s-plot"><svg width="25" height="26"><circle cx="12" cy="11" r="10" fill="#2f68b0"/><path fill="#f7b32b" d="M0 13h10v10h-10z"/><path fill="#2f68b0" d="M0 2h12v11h-12z"/><path stroke="#dfe9f5" stroke-width="1.200" d="M0 6h14M6 1v12M0 2l14 10"/><path fill="none" stroke="#3fb44c" stroke-width="3.200" d="M10 17l6 6 9-9"/></svg><svg width="22" height="22"><circle cx="13" cy="9" r="8" fill="none" stroke="#c9c9c9" stroke-width="1.500"/><path fill="none" stroke="#c9c9c9" stroke-width="1.300" d="M12.500 4v6h4"/><path fill="#fff" d="M1 8h8l3 4v9h-11z"/><path fill="#2f68b0" d="M2 9h6v6h-6z"/><path fill="#f7b32b" d="M2 16h7v4h-7z"/><circle cx="16.500" cy="16" r="5" fill="#4ba3ea"/><path stroke="#fff" stroke-width="1.500" d="M16.500 15v4M16.500 12.500v1.500"/></svg></div>
    <div class="box s-full"><svg width="20" height="20"><path fill="none" stroke="#d9d9d9" stroke-width="1.200" d="M.6 3h18.800v14h-18.800z"/><path fill="#d9d9d9" d="M13 5h4.500v4.500zM2.500 10.500v4.500h4.500z"/><path stroke="#d9d9d9" d="M16 6.500l-3 3M4 13.500l3-3"/></svg><svg width="20" height="20"><path stroke="#e6e6e6" stroke-width="2" d="M0 2h20M0 10h20M0 17.500h20"/></svg></div>
  </div>
</footer>
</div>
</body>
</html>
```
FILE: styles.css
```css
* { box-sizing: border-box; }
body { margin: 0; width: 1920px; height: 1020px; overflow: hidden; background: linear-gradient(90deg, #16243a 50%, #8fa9c9 50%); font: 14px/20px "Open Sans", "Noto Sans", sans-serif; color: #f0f0f0; }
svg { display: block; flex: none; overflow: visible; }
i { display: block; flex: none; }
.defs { position: absolute; }
.window { width: 1916px; height: 1020px; margin-left: 2px; border: 1px solid #0696d7; background: #222933; display: flex; flex-direction: column; }

.caret { width: 0; height: 0; border: 3px solid transparent; border-top: 4px solid #dcdcdc; border-bottom: 0; }
.caret.dim { border-top-color: #777c85; }
.bigcaret { width: 0; height: 0; border: 5px solid transparent; border-top: 5px solid #dcdcdc; border-bottom: 0; }
.bigcaret.up { border-top: 0; border-bottom: 5px solid #555; }

/* Title bar */
.titlebar { height: 38px; display: flex; align-items: center; padding: 0 0 4px 3px; flex: none; }
.logo { margin-top: 3px; }
.logotext { font: 800 9.5px "Open Sans", sans-serif; fill: #fff; letter-spacing: -.2px; }
.quick { display: flex; align-items: center; gap: 10px; margin-left: 11px; width: 585px; }
.quick .caret { margin: 0 2px 0 -1px; }
.quick .custom { margin-left: -4px; }
.quick .plane { margin-left: -1px; }
.share { color: #7fc8ff; margin: 1px 0 0 -3px; letter-spacing: 0; }
.apptitle { display: flex; gap: 23px; color: #fff; width: 544px; letter-spacing: -.1px; margin-top: -1px; }
.apptitle .doc { letter-spacing: .1px; }
.caretright { border: 5px solid transparent; border-left: 5px solid #e6e6e6; border-right: 0; }
.search { width: 223px; height: 26px; margin-left: 8px; background: #454f61; color: #b4b9c1; font-style: italic; font-size: 14px; line-height: 26px; padding-left: 3px; white-space: nowrap; }
.mag { margin-left: 5px; }
.user { margin-left: 10px; }
.account { margin: 1px 0 0 7px; width: 106px; letter-spacing: .1px; }
.c-account { margin-right: 15px; }
.adsk { margin-left: 10px; }
.c-adsk { margin-left: 7px; }
.vsep { width: 1px; height: 22px; background: #4b5362; margin-left: 13px; }
.help { margin-left: 11px; }
.c-help { margin-left: 10px; }
.winbtns { margin-left: 90px; margin-top: -2px; }

/* Ribbon tabs */
.tabs { display: flex; align-items: center; height: 25px; padding-left: 7px; flex: none; color: #b4b6ba; }
.tabs span { padding: 0 12px; line-height: 26px; height: 25px; white-space: nowrap; letter-spacing: .05px; }
.tabs span:nth-child(n+9) { letter-spacing: .15px; }
.tabs .active { background: #3b4453; color: #fff; }
.tabs svg { margin-left: 26px; }
.tabs .caret { margin-left: 5px; }

/* Ribbon panels */
.ribbon { display: flex; height: 124px; margin: 0 4px; background: #3b4453; flex: none; }
.panel { display: flex; flex-direction: column; height: 124px; border-right: 1px solid #222933; flex: none; }
.body { display: flex; height: 100px; }
.panel h3 { margin: 0; height: 24px; padding-top: 2px; font-size: 14px; font-weight: 400; display: flex; align-items: center; justify-content: center; gap: 7px; position: relative; }
.launch { position: absolute; right: 6px; top: 9px; }
.big { display: flex; flex-direction: column; align-items: center; flex: none; padding-top: 8px; }
.big b { font-weight: 400; margin-top: 5px; text-align: center; white-space: nowrap; }
.big.drop b { margin-top: 6px; }
.big .caret { margin-top: 3px; }
.rows { display: flex; flex-direction: column; padding-top: 5px; flex: none; }
.rows > div { height: 31px; display: flex; align-items: center; gap: 6px; white-space: nowrap; letter-spacing: .1px; }
.draw { width: 278px; } .modify { width: 316px; } .annot { width: 184px; } .layers { width: 341px; } .block { width: 100px; }
.props { width: 277px; } .groups { width: 85px; } .utils { width: 121px; } .clip { width: 113px; } .view { width: 91px; border: 0; }
.b-line { width: 53px; } .b-poly { width: 53px; } .b-circle { width: 70px; } .b-arc { width: 44px; }
.r-draw { padding-left: 8px; } .r-draw > div { gap: 10px; }
.m1 { padding-left: 7px; width: 98px; } .m2 { width: 88px; } .m3 { width: 95px; }
.w1 { width: 38px; } .w2 { width: 42px; } .w3 { width: 40px; }
.b-text { width: 58px; } .b-dim { width: 74px; } .r-annot { padding-left: 7px; } .r-annot > div { gap: 10px; }
.b-layer { width: 77px; }
.big.b-layer b, .big.b-match b { letter-spacing: -.1px; }
.layerbox { padding-top: 6px; display: flex; flex-direction: column; }
.combo { height: 28px; background: #4f5b6e; border: 1px solid #222933; display: flex; align-items: center; }
.combo span { padding-top: 1px; }
.c-layer { width: 260px; padding: 0 1px 0 5px; margin-bottom: 7px; }
.c-layer span { margin-left: 5px; flex: 1; }
.icons { display: flex; gap: 10px; height: 31px; padding-left: 4px; }
.b-insert { width: 52px; } .b-insert > svg { margin-top: -2px; } .r-block { padding-left: 3px; } .r-block > div { gap: 10px; }
.b-match { width: 79px; } .b-match b { margin-left: -2px; } .r-props > div { width: 24px; }
.combos { display: flex; flex-direction: column; gap: 3px; padding-top: 6px; }
.combos .combo { width: 171px; padding: 0 3px 0 8px; }
.combos span { margin-left: 4px; flex: 1; }
.combos .combo:not(:first-child) span { margin-left: 1px; }
.swatch { width: 20px; height: 20px; background: #f0f; border: 1px solid #d9d9d9; }
.rule { width: 80px; height: 1px; background: #f0f0f0; }
.props h3 { padding-right: 17px; }
.b-group { width: 51px; } .r-groups > div { width: 29px; justify-content: center; }
.r-groups .on { height: 27px; margin-top: 1px; background: #435b78; border: 1px solid #6fbcf5; }
.b-measure { width: 88px; } .r-utils { padding-left: 3px; }
.b-paste { width: 66px; } .r-clip { padding-left: 3px; } .r-clip > div { gap: 7px; }
.b-base { width: 79px; }
.view h3 { justify-content: flex-start; padding-left: 6px; gap: 8px; }

/* Drawing file tabs */
.files { display: flex; align-items: center; height: 33px; padding: 4px 0 0 15px; flex: none; }
.slash path { stroke: #515a68; fill: none; stroke-width: 1.2; }
.f-start { margin-left: 9px; width: 40px; }
.f-active { width: 205px; height: 30px; background: #3b4453; clip-path: polygon(12px 0, 100% 0, calc(100% - 12px) 100%, 0 100%); display: flex; align-items: center; padding-left: 21px; gap: 11px; letter-spacing: -.03px; color: #fff; }
.f-rd { margin-left: 9px; width: 73px; }
.f-laura { margin-left: 10px; width: 93px; }
.files .plus, .status .plus { margin: 0 13px 0 11px; }

/* Model space */
.canvas { position: relative; height: 749px; flex: none; margin-top: 5px; background: #212830; }
.canvas::before, .canvas::after { content: ""; position: absolute; left: 3px; right: 3px; height: 5px; background: #3b4453; }
.canvas::before { top: -5px; } .canvas::after { bottom: -5px; }
.drawing { position: absolute; left: 0; top: 0; }
.vplabel { position: absolute; left: 7px; top: 6px; letter-spacing: .2px; }
.docbtns { position: absolute; left: 1834px; top: 8px; }
.cube { position: absolute; left: 1752px; top: 44px; }
.cube .top { font: bold 14px "Liberation Sans", sans-serif; text-anchor: middle; fill: #4b515a; }
.compass { font: bold 22px "Liberation Sans", sans-serif; text-anchor: middle; fill: #adafb1; }
.wcs { font: 13px "Liberation Sans", sans-serif; fill: #6d707c; letter-spacing: .3px; }
.navbar { position: absolute; left: 1866px; top: 258px; }
.console { position: absolute; left: 465px; top: 641px; display: flex; flex-direction: column; align-items: flex-start; gap: 6px; font: 15px/21px "DejaVu Sans Mono", monospace; letter-spacing: -.02px; }
.console p { margin: 0; padding: 0 2px; height: 19px; border-radius: 2px; background: #5b5d5f; white-space: pre; }
.console p:nth-child(1) { background: #4b4e51; color: #a8a9ab; }
.console p:nth-child(2) { background: #545658; color: #d2d2d2; }
.cmdbar { position: absolute; left: 386px; top: 715px; display: flex; height: 33px; background: #292e3b; border-radius: 3px; }
.cmdinput { width: 1069px; height: 32px; margin-top: 1px; background: #bdbec0; border-radius: 2px; display: flex; align-items: center; padding: 0 6px 0 5px; }
.cmdinput .bigcaret { margin-left: 2px; border-top-color: #55575a; }
.cmdinput em { font: italic 15px/20px "DejaVu Sans Mono", monospace; color: #6f7174; margin-left: 8px; padding-top: 1px; flex: 1; }

/* Layout tabs and status bar */
.status { display: flex; align-items: center; margin-top: 5px; height: 39px; padding: 0 0 9px 13px; flex: none; }
.l-active { width: 86px; height: 30px; line-height: 32px; background: #3b4453; clip-path: polygon(12px 0, 100% 0, calc(100% - 12px) 100%, 0 100%); font-weight: 700; text-align: center; color: #fff; letter-spacing: -.2px; }
.l1, .l2 { margin-left: 9px; width: 63px; padding-top: 1px; }
.tools { display: flex; align-items: center; margin-left: auto; margin-right: 5px; height: 30px; position: relative; top: 2px; }
.box { height: 30px; background: #3b4453; display: flex; align-items: center; flex: none; }
.box .on { width: 28px; height: 28px; background: #5f8fc3; display: flex; align-items: center; justify-content: center; }
.s-model { width: 59px; justify-content: center; margin-right: 3px; padding-top: 1px; }
.s-grid { width: 80px; padding-left: 1px; margin-right: 3px; } .s-grid > svg { margin: 0 10px 0 6px; }
.s-dyn { width: 30px; justify-content: center; margin-right: 1px; }
.s-ortho { width: 130px; padding-left: 5px; margin-right: 1px; gap: 6px; } .s-ortho > svg:nth-of-type(2) { margin-left: 5px; } .s-ortho > .bigcaret:last-child { margin-left: 3px; }
.s-snap { width: 80px; padding-left: 1px; gap: 2px; margin-right: 3px; } .s-snap .bigcaret { margin-left: 4px; }
.s-anno { width: 132px; padding-left: 1px; margin-right: 3px; } .s-anno > svg { margin-left: 6px; margin-right: 4px; } .scale { margin: 0 6px 0 6px; letter-spacing: -.8px; width: 16px; }
.s-gear { width: 50px; padding-left: 5px; gap: 10px; margin-right: 1px; }
.s-plus { width: 30px; justify-content: center; margin-right: 3px; }
.s-shapes { width: 31px; justify-content: center; margin-right: 3px; }
.s-plot { width: 68px; padding-left: 4px; gap: 8px; margin-right: 3px; }
.s-full { width: 60px; padding-left: 5px; gap: 10px; }
```
